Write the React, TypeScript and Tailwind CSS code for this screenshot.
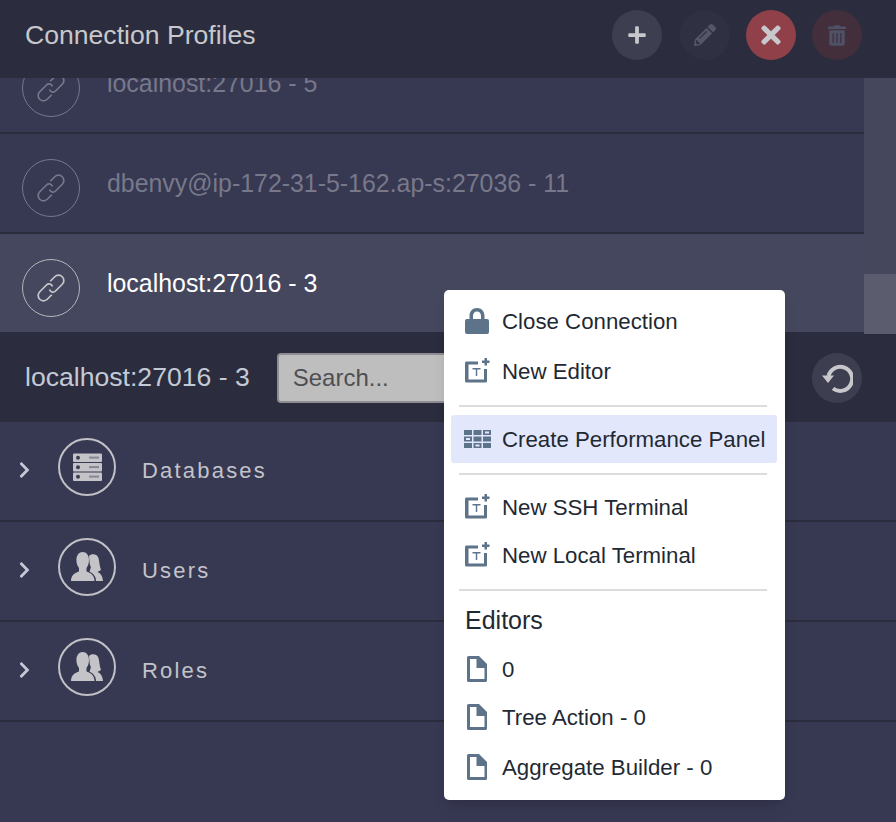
import { FaPlus, FaPencilAlt, FaTimes, FaTrashAlt, FaChevronRight } from "react-icons/fa";
import type { ReactNode } from "react";

function LinkIcon() {
    return (
        <svg viewBox="-16 -16 32 32" className="w-[34px] h-[34px]" fill="none" stroke="currentColor" strokeWidth="1.6">
            <g transform="rotate(-45)">
                <path d="M-4 5H-10A5 5 0 0 1 -10 -5H-1C2 -5 3 -2 2 0" />
                <path d="M4 -5H10A5 5 0 0 1 10 5H1C-2 5 -3 2 -2 0" />
            </g>
        </svg>
    );
}

function ServerIcon() {
    return (
        <svg viewBox="0 0 29 29" className="w-[29px] h-[29px]">
            <g fill="#c3c3c8">
                <rect x="0" y="0.5" width="29" height="8.6" rx="1" />
                <rect x="0" y="10" width="29" height="8.6" rx="1" />
                <rect x="0" y="19.5" width="29" height="8.6" rx="1" />
            </g>
            <g fill="#3d3e56">
                <circle cx="5" cy="4.8" r="2" />
                <circle cx="5" cy="14.3" r="2" />
                <circle cx="5" cy="23.8" r="2" />
            </g>
            <g fill="#3d3e56" opacity="0.45">
                <rect x="16" y="3.6" width="10" height="2" />
                <rect x="16" y="13.1" width="10" height="2" />
                <rect x="16" y="22.6" width="10" height="2" />
            </g>
        </svg>
    );
}

function PeopleIcon() {
    return (
        <svg viewBox="0 0 32 30" className="w-[32px] h-[30px]" fill="#c3c3c8">
            <path d="M18 4C20 1.5 26 1.5 27.5 6C28.5 10 28.5 14 30 18L26.5 20C29 21 31.5 23 32 29H25C25 24 21.5 21 18.5 19.5C19.5 17 19.5 16 20 15C18.5 13.5 18.5 8 18 4Z" />
            <path d="M11.7 0C15.5 0 18 3.5 18 8C18 11.5 16.8 14.5 15.5 16V19.5C19.5 21 23.5 23 23.5 29H0C0 23 4 21 8 19.5V16C6.7 14.5 5.4 11.5 5.4 8C5.4 3.5 7.9 0 11.7 0Z" />
        </svg>
    );
}

function LockIcon() {
    return (
        <svg viewBox="0 0 24 26" className="w-[24px] h-[26px]" fill="#5d7389">
            <path d="M12 0C16.5 0 19.5 3.5 19.5 8V12H16V8C16 5.5 14.5 3.5 12 3.5C9.5 3.5 8 5.5 8 8V12H4.5V8C4.5 3.5 7.5 0 12 0Z" />
            <rect x="0" y="11" width="24" height="15" rx="2" />
        </svg>
    );
}

function NewEditorIcon() {
    return (
        <svg viewBox="0 0 26 26" className="w-[26px] h-[26px]" fill="#5d7389">
            <path d="M2.5 3.5H14V6.5H4.5V21.5H20V11H23V23A1.5 1.5 0 0 1 21.5 24.5H2.5A1.5 1.5 0 0 1 1 23V5A1.5 1.5 0 0 1 2.5 3.5Z" />
            <path d="M20.5 0H23V2.5H25.5V5H23V7.5H20.5V5H18V2.5H20.5Z" />
            <path d="M8.5 10H16.5V11.4H13.2V18H11.8V11.4H8.5Z" />
        </svg>
    );
}

function PanelIcon() {
    const cols = [0, 9.5, 19];
    const rows = [0, 6.5, 13];
    return (
        <svg viewBox="0 0 27 18" className="w-[27px] h-[18px] ml-[2px]" fill="#5d7389">
            {rows.map((y) => cols.map((x) => <rect key={x + "-" + y} x={x} y={y} width="8" height="5" />))}
            <rect x="21" y="1.5" width="4" height="2" fill="#e3e7fc" />
            <rect x="2" y="8" width="4" height="2" fill="#e3e7fc" />
            <rect x="11.5" y="14.5" width="4" height="2" fill="#e3e7fc" />
        </svg>
    );
}

function FileIcon() {
    return (
        <svg viewBox="0 0 20 26" className="w-[20px] h-[26px]" fill="#5d7389">
            <path
                d="M1.5 0H12L20 8V24.5A1.5 1.5 0 0 1 18.5 26H1.5A1.5 1.5 0 0 1 0 24.5V1.5A1.5 1.5 0 0 1 1.5 0ZM3 3V23H17.5V12H9.5V3Z"
                fillRule="evenodd"
            />
        </svg>
    );
}

function RefreshIcon() {
    return (
        <svg viewBox="0 0 32 32" className="w-[32px] h-[32px]" fill="none" stroke="#c8c8cc" strokeWidth="4">
            <path d="M7.5 14A12 12 0 1 1 12 26.5" />
            <path d="M1 13.5H13L7 21Z" fill="#c8c8cc" stroke="none" />
        </svg>
    );
}

function Circle({ className, children }: { className: string; children: ReactNode }) {
    return (
        <div className={"w-[50px] h-[50px] rounded-full flex items-center justify-center " + className}>
            {children}
        </div>
    );
}

function ProfileRow({ label, active }: { label: string; active?: boolean }) {
    return (
        <div
            className={
                "h-[100px] shrink-0 flex items-center pl-[22px] border-b-2 border-[#2b2d3e] " +
                (active ? "bg-[#45475e] text-white" : "bg-[#373852] text-[#77788a]")
            }
        >
            <div
                className={
                    "w-[58px] h-[58px] mt-[10px] rounded-full border-[1.5px] flex items-center justify-center " +
                    (active ? "border-[#b5b5bb] text-[#c8c8cc]" : "border-[#77788a] text-[#77788a]")
                }
            >
                <LinkIcon />
            </div>
            <span className="ml-[27px] pt-[2px] text-[24.9px] whitespace-nowrap">{label}</span>
        </div>
    );
}

function TreeRow({ label, icon }: { label: string; icon: ReactNode }) {
    return (
        <div className="h-[100px] flex items-center pl-[18px] pb-[2px] border-b-2 border-[#2b2d3e]">
            <FaChevronRight className="w-[13px] h-[18px] text-[#c3cad6]" />
            <div className="ml-[27px] mb-[6px] w-[58px] h-[58px] rounded-full border-2 border-[#c0c0c6] flex items-center justify-center">
                {icon}
            </div>
            <span className="ml-[26px] text-[22px] tracking-[2.2px] text-[#c3c3ca]">{label}</span>
        </div>
    );
}

function MenuItem({
    icon,
    label,
    active,
    className = "",
}: {
    icon: ReactNode;
    label: string;
    active?: boolean;
    className?: string;
}) {
    return (
        <div className={"h-[48px] ml-[7px] mr-[8px] flex items-center rounded-[3px] " + (active ? "bg-[#e3e7fc] " : "") + className}>
            <div className="w-[51px] shrink-0 flex justify-center">{icon}</div>
            <span className="pt-[2px] text-[22.25px] text-[#1f2933] whitespace-nowrap">{label}</span>
        </div>
    );
}

function Divider() {
    return <div className="h-[2px] ml-[15px] mr-[18px] mt-[10px] mb-[8px] bg-[#dcdcdc]" />;
}

export default function App() {
    return (
        <div className="relative w-[896px] h-[822px] overflow-hidden bg-[#373852] font-['Liberation_Sans',sans-serif]">
            <header className="h-[78px] bg-[#2b2d3e] flex items-center justify-between pl-[25px] pr-[34px] pb-[8px]">
                <h1 className="pt-[2px] text-[26.6px] font-normal text-[#c8c8cc]">Connection Profiles</h1>
                <div className="flex gap-[16px]">
                    <Circle className="mr-[2px] bg-[#3d3f50] text-[#c8c8cc]">
                        <FaPlus className="w-[20px] h-[20px]" />
                    </Circle>
                    <Circle className="bg-[#2f3142] text-[#55566a]">
                        <FaPencilAlt className="w-[22px] h-[22px]" />
                    </Circle>
                    <Circle className="bg-[#8f4049] text-[#c8c8cc]">
                        <FaTimes className="w-[28px] h-[28px]" />
                    </Circle>
                    <Circle className="bg-[#432e3c] text-[#4f5166]">
                        <FaTrashAlt className="w-[18px] h-[21px]" />
                    </Circle>
                </div>
            </header>

            <div className="h-[256px] flex">
                <div className="flex-1 flex flex-col justify-end overflow-hidden">
                    <ProfileRow label="localhost:27016 - 5" />
                    <ProfileRow label="dbenvy@ip-172-31-5-162.ap-s:27036 - 11" />
                    <ProfileRow label="localhost:27016 - 3" active />
                </div>
                <div className="w-[32px] bg-[#45475c] flex flex-col justify-end">
                    <div className="h-[60px] bg-[#5b5d6e]" />
                </div>
            </div>

            <div className="h-[88px] bg-[#2b2d3e] flex items-center pl-[25px] pr-[34px]">
                <span className="text-[26.6px] text-[#c3cad6] whitespace-nowrap">localhost:27016 - 3</span>
                <div className="ml-[27px] w-[240px] h-[50px] rounded-[4px] bg-[#bebebe] border-2 border-[#8e8e92] flex items-center pl-[14px] text-[24px] text-[#4f4f52]">
                    Search...
                </div>
                <Circle className="ml-auto bg-[#3d3f50]">
                    <RefreshIcon />
                </Circle>
            </div>

            <TreeRow label="Databases" icon={<ServerIcon />} />
            <TreeRow label="Users" icon={<PeopleIcon />} />
            <TreeRow label="Roles" icon={<PeopleIcon />} />

            <div className="absolute left-[444px] top-[290px] w-[341px] h-[510px] bg-white rounded-[5px] pt-[7px] shadow-lg">
                <MenuItem icon={<LockIcon />} label="Close Connection" />
                <MenuItem icon={<NewEditorIcon />} label="New Editor" className="mt-[2px]" />
                <Divider />
                <MenuItem icon={<PanelIcon />} label="Create Performance Panel" active />
                <Divider />
                <MenuItem icon={<NewEditorIcon />} label="New SSH Terminal" />
                <MenuItem icon={<NewEditorIcon />} label="New Local Terminal" />
                <Divider />
                <div className="pl-[21px] mt-[14px] mb-[10px] h-[30px] text-[25px] text-[#1f2933] leading-[30px]">Editors</div>
                <MenuItem icon={<FileIcon />} label="0" />
                <MenuItem icon={<FileIcon />} label="Tree Action - 0" />
                <MenuItem icon={<FileIcon />} label="Aggregate Builder - 0" className="mt-[2px]" />
            </div>
        </div>
    );
}
